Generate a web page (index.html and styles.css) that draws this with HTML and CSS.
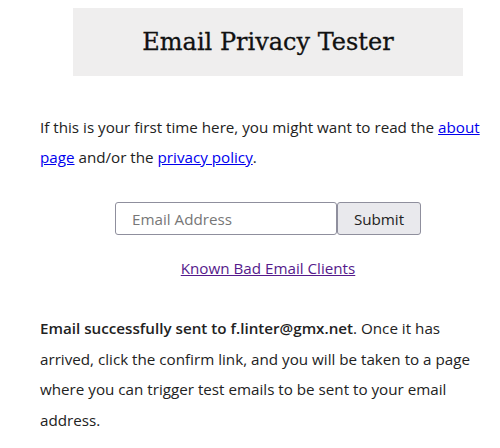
FILE: index.html
```html
<!DOCTYPE html>
<html>
<head>
<meta charset="utf-8">
<link rel="stylesheet" href="styles.css">
</head>
<body>
<main class="page">
  <header class="title-box"><h1 class="title">Email Privacy Tester</h1></header>
  <p class="intro">If this is your first time here, you might want to read the <a href="#" class="link">about page</a> and/or the <a href="#" class="link">privacy policy</a>.</p>
  <form class="signup">
    <input class="email" type="text" placeholder="Email Address"><button class="submit" type="button">Submit</button>
  </form>
  <p class="bad"><a href="#" class="visited">Known Bad Email Clients</a></p>
  <p class="status"><strong class="strong">Email successfully sent to f.linter@gmx.net</strong>. Once it has arrived, click the confirm link, and you will be taken to a page where you can trigger test emails to be sent to your email address.</p>
</main>
</body>
</html>
```
FILE: styles.css
```css
html, body { margin: 0; padding: 0; background: #fff; }
body { font-family: "Open Sans", sans-serif; font-size: 15.2px; color: #222; }
.page { margin-left: 40px; width: 456px; padding-top: 8px; }
.title-box { margin: 0 33px; height: 68px; background: #efeeee; display: flex; align-items: center; justify-content: center; }
.title { margin: 0; font-family: "DejaVu Serif", serif; font-weight: normal; font-size: 24px; color: #111; -webkit-text-stroke: 0.3px #111; }
.intro { margin: 36px 0 0; line-height: 30px; }
.link { color: #0000ee; }
.signup { display: flex; justify-content: center; margin-top: 30px; }
.email { width: 222px; height: 33px; box-sizing: border-box; border: 1px solid #8f8f9d; border-radius: 3px; padding: 0 16px; font: 15.2px "Open Sans", sans-serif; margin: 0; }
.email::placeholder { color: #777; }
.submit { height: 33px; width: 84px; box-sizing: border-box; border: 1px solid #8f8f9d; border-radius: 3px; background: #e9e9ed; font: 15.2px "Open Sans", sans-serif; color: #222; margin: 0; }
.bad { text-align: center; margin: 18px 0 0; line-height: 30px; }
.visited { color: #551a8b; }
.status { margin: 30px 0 0; line-height: 30.7px; }
.strong { font-weight: 600; }
```
